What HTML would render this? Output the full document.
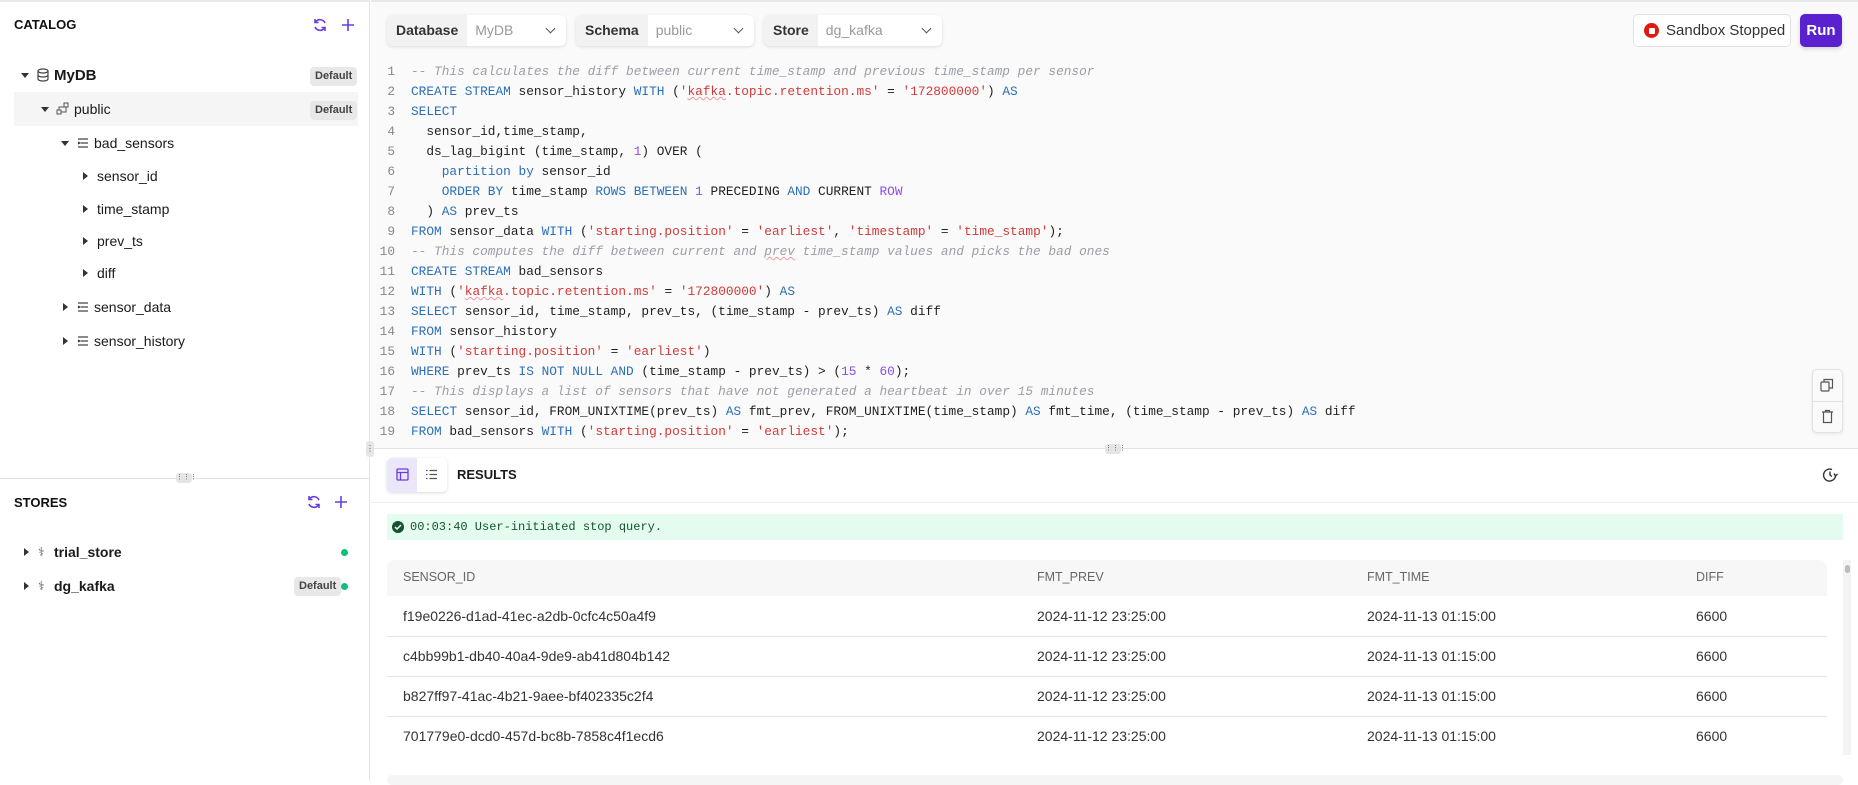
<!DOCTYPE html>
<html><head><meta charset="utf-8"><style>
*{box-sizing:border-box;margin:0;padding:0}
body{width:1858px;height:781px;overflow:hidden;font-family:"Liberation Sans",sans-serif;background:#fff;position:relative;color:#1a1a1a}
.abs{position:absolute}
.side{left:0;top:0;width:370px;height:781px;background:#fff;border-right:1px solid #e5e5e5;border-top:2px solid #e8e8e8}
.title{font-size:13px;font-weight:bold;color:#111}
.row{position:absolute;font-size:14px;display:flex;align-items:center;height:20px;transform:translateY(-10px)}
.caret{position:absolute;width:0;height:0}
.cd{border-left:4px solid transparent;border-right:4px solid transparent;border-top:5px solid #333}
.cr{border-top:4px solid transparent;border-bottom:4px solid transparent;border-left:5px solid #333}
.badge{position:absolute;background:#e8e8e8;border-radius:4px;font-size:11px;font-weight:bold;color:#444;padding:4px 5px;line-height:11px}
.dot{position:absolute;width:7px;height:7px;border-radius:50%;background:#10c07a}
.main{left:371px;top:0;right:0;height:449px;background:#fafafa;border-top:2px solid #e8e8e8;border-bottom:1px solid #e2e2e2}
.dd{position:absolute;top:15px;height:31px;border-radius:6px;background:#fff;box-shadow:0 1px 3px rgba(0,0,0,.12);display:flex;font-size:14px;overflow:hidden}
.dd b{background:#f2f2f2;padding:0 9px;line-height:31px;color:#333}
.dd span{color:#999;padding-left:8px;line-height:31px;flex:1}
.dd i{position:absolute;right:12px;top:10px;width:7px;height:7px;border-right:1.5px solid #555;border-bottom:1.5px solid #555;transform:rotate(45deg)}
.code{position:absolute;left:371px;top:62px;font-family:"Liberation Mono",monospace;font-size:12.8px;line-height:20px;white-space:pre;color:#1f1f1f}
.ln{display:inline-block;width:24px;text-align:right;color:#888;margin-right:16px}
.c{color:#9a9ea6;font-style:italic}.k{color:#2a6fb8}.s{color:#d23a3a}.n{color:#8a4fe0}
.sq{text-decoration:underline wavy #f19aa5;text-decoration-thickness:1px}
.th{font-size:12.5px;color:#666;position:absolute;top:570px}
.td{font-size:14px;color:#333;position:absolute}
.hl{position:absolute;left:387px;width:1440px;height:1px;background:#e3e3e3}
</style></head><body>
<div class="abs side"></div>
<div class="abs title" style="left:14px;top:17px">CATALOG</div>
<svg class="abs" style="left:312px;top:17px" width="16" height="16" viewBox="0 0 16 16" fill="none" stroke="#6a3ce0" stroke-width="1.6"><path d="M13 6A5.5 5.5 0 0 0 3.5 5M3 10a5.5 5.5 0 0 0 9.5 1"/><path d="M3 2v3.5h3.5M13 14v-3.5H9.5"/></svg>
<svg class="abs" style="left:340px;top:17px" width="16" height="16" viewBox="0 0 16 16" stroke="#6a3ce0" stroke-width="1.6"><path d="M8 2v12M2 8h12"/></svg>

<div class="caret cd" style="left:21px;top:73px"></div>
<svg class="abs" style="left:37px;top:68px" width="12" height="14" viewBox="0 0 12 14" fill="none" stroke="#444" stroke-width="1.2"><ellipse cx="6" cy="3" rx="5" ry="2"/><path d="M1 3v8c0 1.1 2.2 2 5 2s5-.9 5-2V3M1 7c0 1.1 2.2 2 5 2s5-.9 5-2"/></svg>
<div class="row" style="left:54px;top:75px;font-weight:bold;font-size:15px">MyDB</div>
<div class="badge" style="left:310px;top:67px">Default</div>

<div class="abs" style="left:14px;top:92px;width:344px;height:34px;background:#f5f5f5"></div>
<div class="caret cd" style="left:41px;top:107px"></div>
<svg class="abs" style="left:56px;top:102px" width="13" height="13" viewBox="0 0 13 13" fill="none" stroke="#555" stroke-width="1"><rect x="1" y="8" width="4" height="4"/><rect x="8" y="1" width="4" height="4"/><path d="M3 8V5h5M5 10h5V5"/></svg>
<div class="row" style="left:74px;top:109px">public</div>
<div class="badge" style="left:310px;top:101px">Default</div>

<div class="caret cd" style="left:61px;top:141px"></div>
<svg class="abs" style="left:77px;top:137px" width="12" height="12" viewBox="0 0 12 12" stroke="#444" stroke-width="1.2"><path d="M1 2h10M4 6h7M1 10h10M1 5l2 1-2 1"/></svg>
<div class="row" style="left:94px;top:143px">bad_sensors</div>
<div class="caret cr" style="left:83px;top:172px"></div><div class="row" style="left:97px;top:176px">sensor_id</div>
<div class="caret cr" style="left:83px;top:205px"></div><div class="row" style="left:97px;top:209px">time_stamp</div>
<div class="caret cr" style="left:83px;top:237px"></div><div class="row" style="left:97px;top:241px">prev_ts</div>
<div class="caret cr" style="left:83px;top:269px"></div><div class="row" style="left:97px;top:273px">diff</div>
<div class="caret cr" style="left:63px;top:303px"></div>
<svg class="abs" style="left:77px;top:301px" width="12" height="12" viewBox="0 0 12 12" stroke="#444" stroke-width="1.2"><path d="M1 2h10M4 6h7M1 10h10M1 5l2 1-2 1"/></svg>
<div class="row" style="left:94px;top:307px">sensor_data</div>
<div class="caret cr" style="left:63px;top:337px"></div>
<svg class="abs" style="left:77px;top:335px" width="12" height="12" viewBox="0 0 12 12" stroke="#444" stroke-width="1.2"><path d="M1 2h10M4 6h7M1 10h10M1 5l2 1-2 1"/></svg>
<div class="row" style="left:94px;top:341px">sensor_history</div>

<div class="abs" style="left:0;top:478px;width:370px;height:1px;background:#e3e3e3"></div>
<div class="abs" style="left:176px;top:473px;width:16px;height:10px;background:#e5e5e5;border-radius:3px;font-size:7px;text-align:center;line-height:10px;color:#555">⋮⋮⋮</div>
<div class="abs title" style="left:14px;top:495px">STORES</div>
<svg class="abs" style="left:306px;top:494px" width="16" height="16" viewBox="0 0 16 16" fill="none" stroke="#6a3ce0" stroke-width="1.6"><path d="M13 6A5.5 5.5 0 0 0 3.5 5M3 10a5.5 5.5 0 0 0 9.5 1"/><path d="M3 2v3.5h3.5M13 14v-3.5H9.5"/></svg>
<svg class="abs" style="left:333px;top:494px" width="16" height="16" viewBox="0 0 16 16" stroke="#6a3ce0" stroke-width="1.6"><path d="M8 2v12M2 8h12"/></svg>
<div class="caret cr" style="left:24px;top:548px"></div>
<div class="row" style="left:38px;top:552px;font-size:12px;color:#555">⚕</div>
<div class="row" style="left:54px;top:552px;font-weight:bold">trial_store</div>
<div class="dot" style="left:341px;top:549px"></div>
<div class="caret cr" style="left:24px;top:582px"></div>
<div class="row" style="left:38px;top:586px;font-size:12px;color:#555">⚕</div>
<div class="row" style="left:54px;top:586px;font-weight:bold">dg_kafka</div>
<div class="badge" style="left:294px;top:577px">Default</div>
<div class="dot" style="left:341px;top:583px"></div>

<div class="abs main"></div>
<div class="dd" style="left:387px;width:179px"><b>Database</b><span>MyDB</span><i></i></div>
<div class="dd" style="left:576px;width:178px"><b>Schema</b><span>public</span><i></i></div>
<div class="dd" style="left:764px;width:178px"><b>Store</b><span>dg_kafka</span><i></i></div>
<div class="abs" style="left:1633px;top:14px;width:158px;height:33px;background:#fff;border:1px solid #e2e2e2;border-radius:5px;font-size:15px;color:#333;line-height:31px;padding-left:32px">Sandbox Stopped</div>
<div class="abs" style="left:1644px;top:23px;width:15px;height:15px;border-radius:50%;background:#e0190f"></div>
<div class="abs" style="left:1648.5px;top:27.5px;width:6px;height:6px;background:#fff;border-radius:1px"></div>
<div class="abs" style="left:1800px;top:14px;width:42px;height:33px;background:#5a22cf;border-radius:5px;color:#fff;font-weight:bold;font-size:15px;text-align:center;line-height:33px;box-shadow:0 2px 4px rgba(0,0,0,.15)">Run</div>

<div class="code"><span class="ln">1</span><span class="c">-- This calculates the diff between current time_stamp and previous time_stamp per sensor</span>
<span class="ln">2</span><span class="k">CREATE STREAM</span> sensor_history <span class="k">WITH</span> (<span class="s">'<span class="sq">kafka</span>.topic.retention.ms'</span> = <span class="s">'172800000'</span>) <span class="k">AS</span>
<span class="ln">3</span><span class="k">SELECT</span>
<span class="ln">4</span>  sensor_id,time_stamp,
<span class="ln">5</span>  ds_lag_bigint (time_stamp, <span class="n">1</span>) OVER (
<span class="ln">6</span>    <span class="k">partition by</span> sensor_id
<span class="ln">7</span>    <span class="k">ORDER BY</span> time_stamp <span class="k">ROWS BETWEEN</span> <span class="n">1</span> PRECEDING <span class="k">AND</span> CURRENT <span class="n">ROW</span>
<span class="ln">8</span>  ) <span class="k">AS</span> prev_ts
<span class="ln">9</span><span class="k">FROM</span> sensor_data <span class="k">WITH</span> (<span class="s">'starting.position'</span> = <span class="s">'earliest'</span>, <span class="s">'timestamp'</span> = <span class="s">'time_stamp'</span>);
<span class="ln">10</span><span class="c">-- This computes the diff between current and <span class="sq">prev</span> time_stamp values and picks the bad ones</span>
<span class="ln">11</span><span class="k">CREATE STREAM</span> bad_sensors
<span class="ln">12</span><span class="k">WITH</span> (<span class="s">'<span class="sq">kafka</span>.topic.retention.ms'</span> = <span class="s">'172800000'</span>) <span class="k">AS</span>
<span class="ln">13</span><span class="k">SELECT</span> sensor_id, time_stamp, prev_ts, (time_stamp - prev_ts) <span class="k">AS</span> diff
<span class="ln">14</span><span class="k">FROM</span> sensor_history
<span class="ln">15</span><span class="k">WITH</span> (<span class="s">'starting.position'</span> = <span class="s">'earliest'</span>)
<span class="ln">16</span><span class="k">WHERE</span> prev_ts <span class="k">IS NOT NULL AND</span> (time_stamp - prev_ts) &gt; (<span class="n">15</span> * <span class="n">60</span>);
<span class="ln">17</span><span class="c">-- This displays a list of sensors that have not generated a heartbeat in over 15 minutes</span>
<span class="ln">18</span><span class="k">SELECT</span> sensor_id, FROM_UNIXTIME(prev_ts) <span class="k">AS</span> fmt_prev, FROM_UNIXTIME(time_stamp) <span class="k">AS</span> fmt_time, (time_stamp - prev_ts) <span class="k">AS</span> diff
<span class="ln">19</span><span class="k">FROM</span> bad_sensors <span class="k">WITH</span> (<span class="s">'starting.position'</span> = <span class="s">'earliest'</span>);</div>

<div class="abs" style="left:1812px;top:369px;width:31px;height:64px;background:#fafafa;border:1px solid #e2e2e2;border-radius:5px;box-shadow:0 1px 3px rgba(0,0,0,.08)"></div>
<div class="abs" style="left:1812px;top:401px;width:31px;height:1px;background:#e2e2e2"></div>
<svg class="abs" style="left:1820px;top:378px" width="14" height="14" viewBox="0 0 14 14" fill="none" stroke="#555" stroke-width="1.2"><rect x="1" y="4" width="8" height="9" rx="1"/><path d="M4 4V1.5h8.5V10H9"/></svg>
<svg class="abs" style="left:1821px;top:409px" width="13" height="15" viewBox="0 0 13 15" fill="none" stroke="#555" stroke-width="1.2"><path d="M1 3h11M4.5 3V1.5h4V3M2.5 3v10.5h8V3"/></svg>
<div class="abs" style="left:366px;top:441px;width:8px;height:16px;background:#e5e5e5;border-radius:3px;font-size:8px;line-height:16px;text-align:center;color:#555">⋮</div>
<div class="abs" style="left:1105px;top:444px;width:16px;height:10px;background:#e5e5e5;border-radius:3px;font-size:7px;text-align:center;line-height:10px;color:#555">⋮⋮⋮</div>

<div class="abs" style="left:387px;top:458px;width:60px;height:34px;border-radius:5px;background:#fff;box-shadow:0 1px 3px rgba(0,0,0,.15);overflow:hidden"><div style="width:30px;height:34px;background:#ece6fb"></div></div>
<svg class="abs" style="left:396px;top:468px" width="13" height="13" viewBox="0 0 13 13" fill="none" stroke="#6a3ce0" stroke-width="1.3"><rect x="1" y="1" width="11" height="11" rx="1"/><path d="M1 4.5h11M4.5 4.5V12"/></svg>
<svg class="abs" style="left:425px;top:469px" width="13" height="11" viewBox="0 0 13 11" stroke="#555" stroke-width="1.2"><path d="M1 1.5h1.5M4.5 1.5H12M1 5.5h1.5M4.5 5.5H12M1 9.5h1.5M4.5 9.5H12"/></svg>
<div class="abs" style="left:457px;top:467px;font-size:13px;font-weight:bold">RESULTS</div>
<svg class="abs" style="left:1822px;top:467px" width="16" height="16" viewBox="0 0 16 16" fill="none" stroke="#333" stroke-width="1.4"><path d="M13.5 9A6 6 0 1 1 10 2.6"/><path d="M8 4.5V8l2 1.5M12 6.5l1.5 2.5 2-2"/></svg>
<div class="abs" style="left:371px;top:502px;width:1487px;height:1px;background:#ececec"></div>

<div class="abs" style="left:387px;top:514px;width:1456px;height:26px;background:#e3fcef"></div>
<div class="abs" style="left:392px;top:521px;width:12px;height:12px;border-radius:50%;background:#14532d"></div>
<svg class="abs" style="left:394px;top:523px" width="8" height="8" viewBox="0 0 8 8" fill="none" stroke="#fff" stroke-width="1.5"><path d="M1 4l2 2 4-4"/></svg>
<div class="abs" style="left:410px;top:520px;font-family:'Liberation Mono',monospace;font-size:12px;color:#14532d">00:03:40 User-initiated stop query.</div>

<div class="abs" style="left:387px;top:560px;width:1440px;height:36px;background:#f7f7f8;border-radius:8px 8px 0 0"></div>
<div class="th" style="left:403px">SENSOR_ID</div>
<div class="th" style="left:1037px">FMT_PREV</div>
<div class="th" style="left:1367px">FMT_TIME</div>
<div class="th" style="left:1696px">DIFF</div>
<div class="hl" style="top:636px"></div><div class="hl" style="top:676px"></div><div class="hl" style="top:716px"></div>
<div class="td" style="left:403px;top:608px">f19e0226-d1ad-41ec-a2db-0cfc4c50a4f9</div>
<div class="td" style="left:403px;top:648px">c4bb99b1-db40-40a4-9de9-ab41d804b142</div>
<div class="td" style="left:403px;top:688px">b827ff97-41ac-4b21-9aee-bf402335c2f4</div>
<div class="td" style="left:403px;top:728px">701779e0-dcd0-457d-bc8b-7858c4f1ecd6</div>
<div class="td" style="left:1037px;top:608px">2024-11-12 23:25:00</div>
<div class="td" style="left:1037px;top:648px">2024-11-12 23:25:00</div>
<div class="td" style="left:1037px;top:688px">2024-11-12 23:25:00</div>
<div class="td" style="left:1037px;top:728px">2024-11-12 23:25:00</div>
<div class="td" style="left:1367px;top:608px">2024-11-13 01:15:00</div>
<div class="td" style="left:1367px;top:648px">2024-11-13 01:15:00</div>
<div class="td" style="left:1367px;top:688px">2024-11-13 01:15:00</div>
<div class="td" style="left:1367px;top:728px">2024-11-13 01:15:00</div>
<div class="td" style="left:1696px;top:608px">6600</div>
<div class="td" style="left:1696px;top:648px">6600</div>
<div class="td" style="left:1696px;top:688px">6600</div>
<div class="td" style="left:1696px;top:728px">6600</div>
<div class="abs" style="left:1843px;top:560px;width:8px;height:195px;background:#f3f3f3"></div>
<div class="abs" style="left:1845px;top:565px;width:5px;height:8px;background:#bbb;border-radius:3px"></div>
<div class="abs" style="left:387px;top:775px;width:1456px;height:10px;background:#f5f5f5;border-radius:6px"></div>
</body></html>
